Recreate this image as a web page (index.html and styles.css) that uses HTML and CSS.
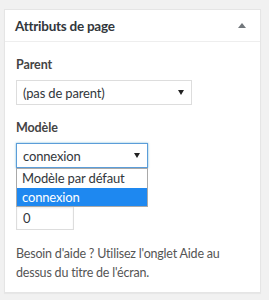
FILE: index.html
```html
<!DOCTYPE html>
<html lang="fr">
<head>
    <meta charset="UTF-8">
    <meta name="viewport" content="width=device-width, initial-scale=1.0">
    <title>Attributs de page</title>
    <link rel="stylesheet" href="styles.css">
</head>
<body>
    <div class="postbox">
        <div class="postbox-header">
            <h2 class="hndle">Attributs de page</h2>
            <span class="toggle-arrow"></span>
        </div>
        <div class="inside">
            <p class="attr-label">Parent</p>
            <div class="fake-select parent-select">
                <span>(pas de parent)</span>
                <span class="select-arrow"></span>
            </div>

            <p class="attr-label">Modèle</p>
            <div class="template-wrap">
                <div class="fake-select template-select is-open">
                    <span>connexion</span>
                    <span class="select-arrow"></span>
                </div>
                <ul class="dropdown">
                    <li>Modèle par défaut</li>
                    <li class="selected">connexion</li>
                </ul>
            </div>

            <!-- the "Ordre" label sits under the open dropdown -->
            <div class="order-spacer"></div>
            <div class="order-input">0</div>

            <p class="help">Besoin d'aide ? Utilisez l'onglet Aide au dessus du titre de l'écran.</p>
        </div>
    </div>
</body>
</html>
```

FILE: styles.css
```css
body {
    margin: 0;
    padding: 9px 8px 10px 4px;
    background: #f1f1f1;
    font-family: "Lato", "Noto Sans", sans-serif;
    font-size: 13px;
    color: #444;
}

.postbox {
    width: 257px;
    box-sizing: border-box;
    background: #fff;
    border: 1px solid #e5e5e5;
    box-shadow: 0 1px 1px rgba(0, 0, 0, 0.04);
}

.postbox-header {
    display: flex;
    align-items: center;
    justify-content: space-between;
    height: 31px;
    padding: 0 14px 0 10px;
    border-bottom: 1px solid #eee;
}

.hndle {
    margin: 0;
    font-size: 13.5px;
    font-weight: 700;
    letter-spacing: -0.25px;
    color: #32373c;
}

.toggle-arrow {
    width: 0;
    height: 0;
    border-left: 4px solid transparent;
    border-right: 4px solid transparent;
    border-bottom: 5px solid #72777c;
}

.inside {
    padding: 0 11px 10px;
}

.attr-label {
    margin: 14px 0 6px;
    line-height: 18px;
    font-size: 12.5px;
    font-weight: 700;
    letter-spacing: -0.1px;
    color: #444;
}

.fake-select {
    display: flex;
    align-items: center;
    justify-content: space-between;
    box-sizing: border-box;
    height: 25px;
    padding: 0 7px 0 6px;
    border: 1px solid #ddd;
    font-size: 13px;
    letter-spacing: -0.15px;
    color: #32373c;
}

.parent-select {
    width: 176px;
}

.template-wrap {
    position: relative;
}

.template-select {
    width: 132px;
}

.fake-select.is-open {
    border-color: #5b9dd9;
    box-shadow: 0 0 2px rgba(30, 140, 190, 0.6);
}

.select-arrow {
    width: 0;
    height: 0;
    border-left: 3px solid transparent;
    border-right: 3px solid transparent;
    border-top: 5px solid #222;
}

.dropdown {
    position: absolute;
    top: 25px;
    left: 0;
    z-index: 2;
    width: 132px;
    box-sizing: border-box;
    margin: 0;
    padding: 0;
    list-style: none;
    background: #fff;
    border: 1px solid #a9a9a9;
    font-size: 13px;
    letter-spacing: -0.15px;
    color: #32373c;
}

.dropdown li {
    height: 18px;
    line-height: 18px;
    padding: 0 5px;
    white-space: nowrap;
    overflow: hidden;
}

.dropdown li:first-child {
    height: 19px;
}

.dropdown li.selected {
    background: #1e88f0;
    color: #fff;
}

.order-spacer {
    height: 38px;
}

.order-input {
    box-sizing: border-box;
    width: 58px;
    height: 24px;
    line-height: 22px;
    padding: 0 6px;
    border: 1px solid #ddd;
    box-shadow: inset 0 1px 2px rgba(0, 0, 0, 0.07);
    font-size: 13px;
    color: #32373c;
}

.help {
    max-width: 222px;
    margin: 15px 0 0;
    line-height: 18.5px;
    font-size: 12.5px;
    letter-spacing: -0.2px;
    color: #555;
}
```
